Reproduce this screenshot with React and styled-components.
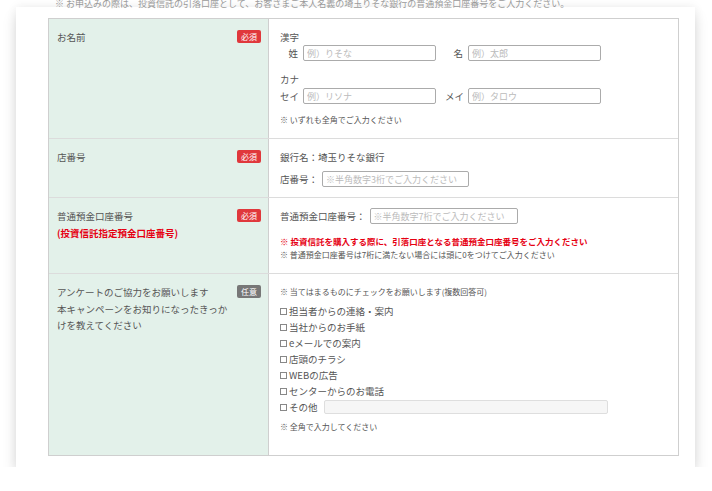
import React from "react";
import styled, { createGlobalStyle } from "styled-components";

const Global = createGlobalStyle`
  html, body { margin: 0; padding: 0; background: #fff; }
  body {
    font-family: "Noto Sans CJK JP", "Noto Sans", sans-serif;
    color: #555;
    overflow: hidden;
  }
`;

const Page = styled.div`
  padding: 7px 0 0 16px;
`;

const Card = styled.div`
  width: 679px;
  box-sizing: border-box;
  background: #fff;
  display: flex;
  flex-direction: column;
  padding: 0 16px 11px 32px;
  box-shadow: 0 9px 14px rgba(0, 0, 0, 0.12), 0 0 10px rgba(0, 0, 0, 0.07);
`;

const TopNote = styled.div`
  margin-top: -8px;
  height: 19px;
  line-height: 10px;
  font-size: 9px;
  color: #9a9a9a;
  padding-left: 7px;
  white-space: nowrap;
  overflow: hidden;
`;

const Table = styled.div`
  border: 1px solid #cfcfcf;
  display: flex;
  flex-direction: column;
`;

const Row = styled.div`
  display: grid;
  grid-template-columns: 220px 1fr;
  & + & {
    border-top: 1px solid #dcdcdc;
  }
`;

const LabelCell = styled.div`
  box-sizing: border-box;
  background: #e3f1ea;
  border-right: 1px solid #cfcfcf;
  padding: 10px 7px 10px 8px;
  display: flex;
  justify-content: space-between;
  align-items: flex-start;
  gap: 6px;
`;

const LabelText = styled.div`
  font-size: 9.5px;
  line-height: 16.5px;
  color: #555;
`;

const RedLabel = styled.span`
  color: #e60012;
  font-weight: bold;
`;

const Badge = styled.span`
  flex-shrink: 0;
  margin-top: 1px;
  font-size: 8px;
  line-height: 13px;
  height: 13px;
  padding: 0 4px;
  border-radius: 2px;
  color: #fff;
  background: ${(p) => (p.$optional ? "#777" : "#e0383c")};
`;

const ValueCell = styled.div`
  padding: ${(p) => p.$pad || "10px 11px 10px 11px"};
  display: flex;
  flex-direction: column;
  align-items: flex-start;
  font-size: 9.5px;
`;

const Line = styled.div`
  line-height: 16px;
  font-size: 9.5px;
  margin-top: ${(p) => p.$mt || 0}px;
`;

const FieldRow = styled.div`
  display: flex;
  align-items: center;
  height: 16px;
  margin-top: ${(p) => p.$mt || 0}px;
`;

const Pair = styled.div`
  display: flex;
  align-items: center;
  & + & {
    margin-left: 9px;
  }
`;

const PairLabel = styled.span`
  width: 18px;
  text-align: right;
  margin-right: 5px;
  font-size: 9.5px;
  white-space: nowrap;
`;

const InlineLabel = styled.span`
  font-size: 9.5px;
  margin-right: 4px;
  white-space: nowrap;
`;

const Input = styled.input`
  width: ${(p) => p.$w}px;
  height: ${(p) => p.$h || 16}px;
  box-sizing: border-box;
  border: 1px solid ${(p) => (p.$soft ? "#dedede" : "#ababab")};
  background: ${(p) => (p.$soft ? "#f6f6f6" : "#fff")};
  border-radius: 2px;
  font-size: 9px;
  padding: 0 3px;
  font-family: inherit;
  color: #555;
  outline: none;
  &::placeholder {
    color: #bbb;
  }
`;

const Note = styled.div`
  font-size: ${(p) => (p.$red ? 8.5 : 8)}px;
  line-height: ${(p) => p.$lh || 16}px;
  color: ${(p) => (p.$red ? "#e60012" : "#555")};
  font-weight: ${(p) => (p.$red ? "bold" : "normal")};
  margin-top: ${(p) => p.$mt || 0}px;
  white-space: nowrap;
`;

const CheckList = styled.div`
  display: flex;
  flex-direction: column;
  margin-top: 3px;
  align-self: stretch;
`;

const CheckItem = styled.label`
  display: flex;
  align-items: center;
  height: 16px;
  font-size: 9.5px;
  white-space: nowrap;
`;

const Box = styled.span`
  width: 5px;
  height: 5px;
  border: 1px solid #888;
  margin: 0 2px 0 0;
  flex-shrink: 0;
`;

const OtherText = styled.span`
  margin-right: 6px;
`;

const items = [
  "担当者からの連絡・案内",
  "当社からのお手紙",
  "eメールでの案内",
  "店頭のチラシ",
  "WEBの広告",
  "センターからのお電話",
];

export default function App() {
  return (
    <>
      <Global />
      <Page>
        <Card>
          <TopNote>
            ※ お申込みの際は、投資信託の引落口座として、お客さまご本人名義の埼玉りそな銀行の普通預金口座番号をご入力ください。
          </TopNote>
          <Table>
            <Row>
              <LabelCell>
                <LabelText>お名前</LabelText>
                <Badge>必須</Badge>
              </LabelCell>
              <ValueCell>
                <Line>漢字</Line>
                <FieldRow>
                  <Pair>
                    <PairLabel>姓</PairLabel>
                    <Input $w={133} placeholder="例）りそな" />
                  </Pair>
                  <Pair>
                    <PairLabel>名</PairLabel>
                    <Input $w={133} placeholder="例）太郎" />
                  </Pair>
                </FieldRow>
                <Line $mt={10}>カナ</Line>
                <FieldRow $mt={1}>
                  <Pair>
                    <PairLabel>セイ</PairLabel>
                    <Input $w={133} placeholder="例）リソナ" />
                  </Pair>
                  <Pair>
                    <PairLabel>メイ</PairLabel>
                    <Input $w={133} placeholder="例）タロウ" />
                  </Pair>
                </FieldRow>
                <Note $mt={8}>※ いずれも全角でご入力ください</Note>
              </ValueCell>
            </Row>
            <Row>
              <LabelCell>
                <LabelText>店番号</LabelText>
                <Badge>必須</Badge>
              </LabelCell>
              <ValueCell>
                <Line>銀行名：埼玉りそな銀行</Line>
                <FieldRow $mt={6}>
                  <InlineLabel>店番号：</InlineLabel>
                  <Input $w={147} placeholder="※半角数字3桁でご入力ください" />
                </FieldRow>
              </ValueCell>
            </Row>
            <Row>
              <LabelCell>
                <LabelText>
                  普通預金口座番号
                  <br />
                  <RedLabel>(投資信託指定預金口座番号)</RedLabel>
                </LabelText>
                <Badge>必須</Badge>
              </LabelCell>
              <ValueCell $pad="10px 11px 11px 11px">
                <FieldRow>
                  <InlineLabel>普通預金口座番号：</InlineLabel>
                  <Input $w={148} placeholder="※半角数字7桁でご入力ください" />
                </FieldRow>
                <Note $red $lh={14} $mt={10}>
                  ※ 投資信託を購入する際に、引落口座となる普通預金口座番号をご入力ください
                </Note>
                <Note $lh={14}>
                  ※ 普通預金口座番号は7桁に満たない場合には頭に0をつけてご入力ください
                </Note>
              </ValueCell>
            </Row>
            <Row>
              <LabelCell>
                <LabelText>
                  アンケートのご協力をお願いします
                  <br />
                  本キャンペーンをお知りになったきっか
                  <br />
                  けを教えてください
                </LabelText>
                <Badge $optional>任意</Badge>
              </LabelCell>
              <ValueCell $pad="10px 11px 20px 11px">
                <Note>※ 当てはまるものにチェックをお願いします(複数回答可)</Note>
                <CheckList>
                  {items.map((t) => (
                    <CheckItem key={t}>
                      <Box />
                      {t}
                    </CheckItem>
                  ))}
                  <CheckItem>
                    <Box />
                    <OtherText>その他</OtherText>
                    <Input $w={284} $h={14} $soft />
                  </CheckItem>
                </CheckList>
                <Note $mt={4}>※ 全角で入力してください</Note>
              </ValueCell>
            </Row>
          </Table>
        </Card>
      </Page>
    </>
  );
}
